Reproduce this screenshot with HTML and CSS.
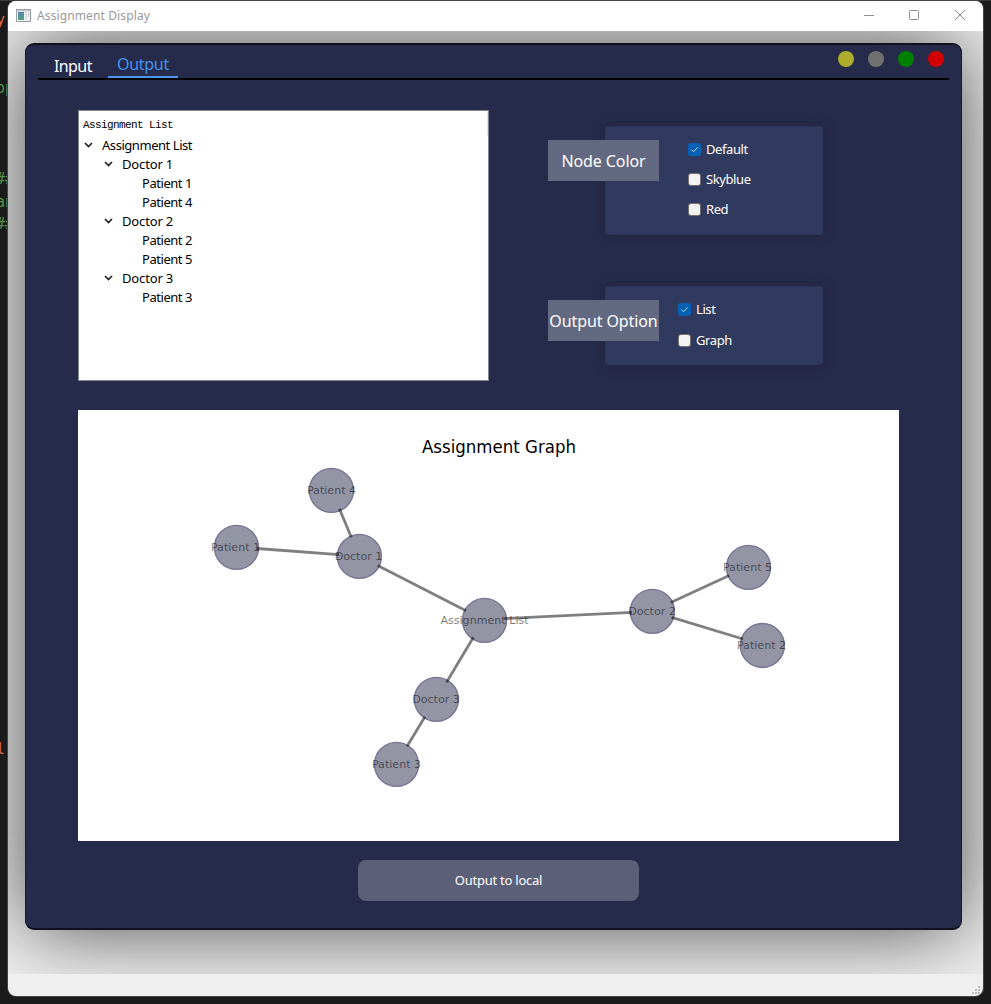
FILE: index.html
```html
<!DOCTYPE html>
<html lang="en">
<head>
<meta charset="utf-8">
<title>Assignment Display</title>
<link rel="stylesheet" href="styles.css">
</head>
<body>
<div class="editor" aria-hidden="true">
  <span class="code red y1">y</span>
  <span class="code y2">op</span>
  <span class="code y3">##</span>
  <span class="code y4">an</span>
  <span class="code y5">##</span>
  <span class="code red y6">l</span>
</div>
<div class="window">
  <header class="titlebar">
    <svg class="app-icon" width="15" height="13" viewBox="0 0 15 13"><defs><linearGradient id="pic" x2="0" y2="1"><stop stop-color="#5b83b8"/><stop offset="1" stop-color="#4fa37a"/></linearGradient></defs><rect x=".5" y=".5" width="14" height="12" fill="#f4f4f4" stroke="#9a9fa3"/><rect x="1" y="1" width="13" height="1.500" fill="#c4cbd2"/><rect x="2" y="3" width="6" height="8" fill="url(#pic)"/><rect x="9" y="3" width="2" height="8" fill="#dcdfe2"/><rect x="12" y="3" width="1.500" height="5" fill="#cfd5da"/></svg>
    <span class="title">Assignment Display</span>
    <svg class="controls" width="102" height="12" viewBox="0 0 102 12" fill="none" stroke="#8f8f8f"><path d="M0 6.500h10"/><rect x="45.500" y="1.500" width="9" height="9" rx="1"/><path d="M91 1l10 10M101 1L91 11"/></svg>
  </header>
  <main class="stage">
    <section class="panel">
      <nav class="tabs">
        <span class="tab">Input</span>
        <span class="tab active">Output</span>
        <div class="dots"><i class="dot yellow"></i><i class="dot gray"></i><i class="dot green"></i><i class="dot crimson"></i></div>
      </nav>
      <div class="top">
        <div class="tree">
          <div class="tree-head">Assignment List</div>
          <div class="row l0"><svg class="chev" viewBox="0 0 9 6"><path d="M1 1l3.500 3.500L8 1"/></svg>Assignment List</div>
          <div class="row l1"><svg class="chev" viewBox="0 0 9 6"><path d="M1 1l3.500 3.500L8 1"/></svg>Doctor 1</div>
          <div class="row l2">Patient 1</div>
          <div class="row l2">Patient 4</div>
          <div class="row l1"><svg class="chev" viewBox="0 0 9 6"><path d="M1 1l3.500 3.500L8 1"/></svg>Doctor 2</div>
          <div class="row l2">Patient 2</div>
          <div class="row l2">Patient 5</div>
          <div class="row l1"><svg class="chev" viewBox="0 0 9 6"><path d="M1 1l3.500 3.500L8 1"/></svg>Doctor 3</div>
          <div class="row l2">Patient 3</div>
        </div>
        <div class="options">
          <div class="group">
            <div class="tag">Node Color</div>
            <div class="card color-card">
              <label class="opt"><svg class="box on" viewBox="0 0 13 13"><path d="M3.500 6.700l2 2 4-4.200"/></svg>Default</label>
              <label class="opt"><span class="box"></span>Skyblue</label>
              <label class="opt"><span class="box"></span>Red</label>
            </div>
          </div>
          <div class="group">
            <div class="tag">Output Option</div>
            <div class="card output-card">
              <label class="opt"><svg class="box on" viewBox="0 0 13 13"><path d="M3.500 6.700l2 2 4-4.200"/></svg>List</label>
              <label class="opt"><span class="box"></span>Graph</label>
            </div>
          </div>
        </div>
      </div>
      <svg class="graph" width="821" height="431" viewBox="78 410 821 431">
        <text class="graph-title" x="499" y="453" textLength="154" lengthAdjust="spacingAndGlyphs">Assignment Graph</text>
        <g class="nodes">
          <circle cx="331.400" cy="490.400" r="22"/><circle cx="236.500" cy="547.400" r="22"/><circle cx="359.400" cy="556.400" r="22"/><circle cx="484.500" cy="620.400" r="22"/><circle cx="652.400" cy="611.400" r="22"/><circle cx="748.500" cy="567.400" r="22"/><circle cx="762.400" cy="645.500" r="22"/><circle cx="436.400" cy="699.400" r="22"/><circle cx="396.500" cy="764.400" r="22"/>
        </g>
        <g class="edges">
          <path d="M339.400 508.800L351.300 537.200M257 548.500L339 554.700M377.700 565.600L466 610.800M504.500 618.500L632 612.300M670.800 602.500L729.200 575.500M671.700 617.300L743 639M473.400 637.300L446.600 682.200M424.900 716.800L407.100 746.200"/>
        </g>
        <g class="labels">
          <text x="331.500" y="494">Patient 4</text><text x="235.500" y="551">Patient 1</text><text x="358.500" y="560">Doctor 1</text><text x="484.500" y="624">Assignment List</text><text x="652" y="615">Doctor 2</text><text x="747.500" y="571">Patient 5</text><text x="761.500" y="649">Patient 2</text><text x="436" y="703">Doctor 3</text><text x="396.500" y="768">Patient 3</text>
        </g>
      </svg>
      <button class="export">Output to local</button>
    </section>
  </main>
  <footer class="status"><svg width="9" height="9" viewBox="0 0 9 9" fill="#bdbdbd"><path d="M6 0h2v2H6zM3 3h2v2H3zM6 3h2v2H6zM0 6h2v2H0zM3 6h2v2H3zM6 6h2v2H6z"/></svg></footer>
</div>
</body>
</html>
```
FILE: styles.css
```css
* { box-sizing: border-box; }
body { margin: 0; width: 991px; height: 1004px; padding: 1px 7px 8px 8px; overflow: hidden; background: #1b1b1b; position: relative; font: 13px/19px "Noto Sans", sans-serif; }
.editor { position: absolute; inset: 0; overflow: hidden; border-top: 1px solid #3b3b3b; }
.code { position: absolute; left: -4px; white-space: nowrap; color: #54924b; font: 15px/18px "DejaVu Sans Mono", monospace; }
.code.red { color: #d7674b; }
.y1 { top: 10px; } .y2 { top: 78px; } .y3 { top: 169px; } .y4 { top: 192px; } .y5 { top: 214px; } .y6 { top: 739px; }
.window { position: relative; width: 975px; height: 995px; border-radius: 8px; overflow: hidden; background: #efefef; display: flex; flex-direction: column; box-shadow: 0 0 0 1px #444; }
.titlebar { height: 30px; flex: none; background: #fff; display: flex; align-items: center; padding: 0 17px 2px 8px; }
.title { margin-left: 6px; font-size: 12px; letter-spacing: .12px; color: #999; }
.controls { margin-left: auto; }
.stage { height: 943px; flex: none; overflow: hidden; padding: 12px 21px 0 17px; background: #f0f0f0; }
.panel { height: 887px; background: #272b4b; border: 1px solid #191b2e; border-top: 2px solid #10111c; border-bottom: 2px solid #10111c; border-radius: 9px; box-shadow: 0 0 84px rgba(0,0,0,.7); display: flex; flex-direction: column; color: #fff; }
.tabs { height: 35px; flex: none; margin: 0 12px; border-bottom: 2px solid #000; display: flex; align-items: flex-start; font-size: 16px; }
.tab { padding: 11px 16px 0; width: 70px; height: 33px; line-height: 20px; letter-spacing: -.6px; white-space: nowrap; }
.tab.active { color: #4192ef; border-bottom: 2px solid #4a95f0; padding: 9px 9px 0; letter-spacing: -.3px; }
.dots { margin: 6px 5px 0 auto; display: flex; gap: 14px; }
.dot { width: 16px; height: 16px; border-radius: 50%; }
.yellow { background: #aeac2c; } .gray { background: #707070; } .green { background: #008000; } .crimson { background: #d20000; }
.top { margin: 30px 0 0 52px; display: flex; }
.tree { width: 411px; height: 271px; background: #fff; border: 1px solid #828790; color: #000; }
.tree-head { height: 25px; padding: 5px 0 0 4px; font: 11px/18px "Liberation Mono", monospace; letter-spacing: -.6px; border-right: 1px solid #e5e5e5; }
.row { height: 19px; display: flex; align-items: center; letter-spacing: -.45px; }
.l0 { padding-left: 5px; } .l1 { padding-left: 25px; letter-spacing: -.15px; } .l2 { padding-left: 63px; }
.chev { width: 9px; height: 6px; margin-right: 9px; position: relative; top: -1px; fill: none; stroke: #222; stroke-width: 1.7; }
.options { padding: 16px 0 0 59px; display: flex; flex-direction: column; gap: 51px; }
.group { display: flex; align-items: flex-start; }
.tag { position: relative; z-index: 1; width: 111px; height: 41px; margin: 14px -54.500px 0 0; background: #636981; font-size: 16px; line-height: 42px; letter-spacing: -.1px; text-align: center; white-space: nowrap; }
.card { width: 218px; background: #303a5e; border: 1px solid #2c3658; border-radius: 3px; box-shadow: 0 0 14px rgba(20,22,40,.28); }
.color-card { height: 109px; padding: 7px 0 0 82.500px; }
.output-card { height: 79px; padding: 7px 0 0 72.500px; }
.opt { display: flex; align-items: center; gap: 5px; height: 30px; letter-spacing: -.4px; }
.output-card .opt + .opt { height: 32px; }
.box { width: 13px; height: 13px; flex: none; border-radius: 3px; background: #f3f3f3; border: 1px solid #77736c; }
.box.on { background: #0560b6; border: 0; fill: none; stroke: #c5dcf0; stroke-width: 1; }
.graph { margin: 29px 0 0 52px; background: #fff; flex: none; }
.graph text { font-family: "DejaVu Sans", sans-serif; text-anchor: middle; }
.graph-title { font-size: 18px; fill: #000; }
.nodes { fill: #9395a5; stroke: #777494; stroke-width: 1.400; }
.edges { fill: none; stroke: #000; stroke-opacity: .5; stroke-width: 2.800; }
.labels { font-size: 11.100px; fill: #000; fill-opacity: .53; }
.export { margin: 19px 0 0 332px; padding: 0 0 2px; width: 281px; height: 41px; border: 0; border-radius: 8px; background: #5b5f77; color: #fff; font: 13px "Noto Sans", sans-serif; letter-spacing: -.25px; flex: none; }
.status { flex: 1; display: flex; justify-content: flex-end; align-items: flex-end; padding: 0 2px 1px; }
```
